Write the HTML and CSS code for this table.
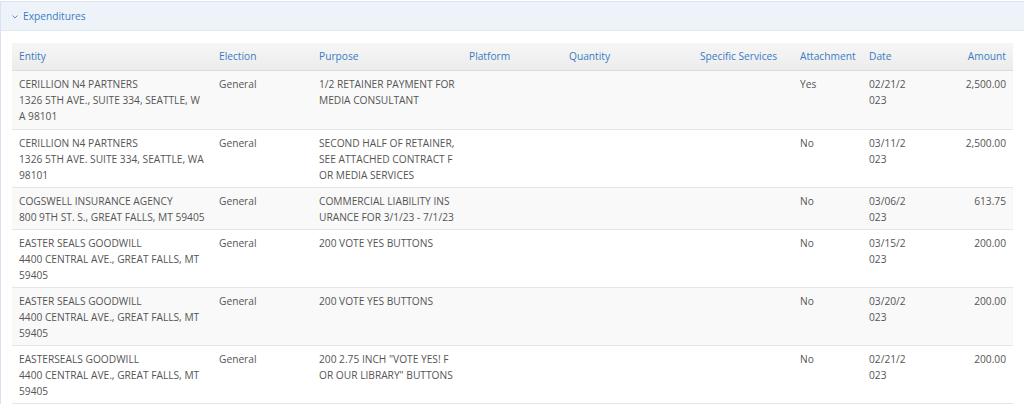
FILE: index.html
```html
<!DOCTYPE html>
<html>
<head>
<meta charset="utf-8">
<link rel="stylesheet" href="styles.css">
</head>
<body>
<div class="panel">
  <div class="panel-head">
    <svg class="chev" width="8" height="6" viewBox="0 0 8 6"><path d="M1.5 1.5 L4 4 L6.5 1.5" fill="none" stroke="#5a8fd0" stroke-width="1"/></svg>
    <span class="title">Expenditures</span>
  </div>
  <div class="panel-body">
    <table class="grid">
      <colgroup>
        <col style="width:200px"><col style="width:100px"><col style="width:150px"><col style="width:100px"><col style="width:131px"><col style="width:100px"><col style="width:69px"><col style="width:52px"><col style="width:99px">
      </colgroup>
      <thead>
        <tr>
          <th>Entity</th><th>Election</th><th>Purpose</th><th>Platform</th><th>Quantity</th><th>Specific Services</th><th>Attachment</th><th>Date</th><th class="num">Amount</th>
        </tr>
      </thead>
      <tbody>
        <tr>
          <td>CERILLION N4 PARTNERS<br>1326 5TH AVE., SUITE 334, SEATTLE, WA 98101</td>
          <td>General</td><td class="purpose">1/2 RETAINER PAYMENT FOR MEDIA CONSULTANT</td><td></td><td></td><td></td><td>Yes</td><td class="date">02/21/2023</td><td class="num">2,500.00</td>
        </tr>
        <tr>
          <td>CERILLION N4 PARTNERS<br>1326 5TH AVE. SUITE 334, SEATTLE, WA 98101</td>
          <td>General</td><td class="purpose">SECOND HALF OF RETAINER, SEE ATTACHED CONTRACT FOR MEDIA SERVICES</td><td></td><td></td><td></td><td>No</td><td class="date">03/11/2023</td><td class="num">2,500.00</td>
        </tr>
        <tr>
          <td>COGSWELL INSURANCE AGENCY<br>800 9TH ST. S., GREAT FALLS, MT 59405</td>
          <td>General</td><td class="purpose">COMMERCIAL LIABILITY INSURANCE FOR 3/1/23 - 7/1/23</td><td></td><td></td><td></td><td>No</td><td class="date">03/06/2023</td><td class="num">613.75</td>
        </tr>
        <tr>
          <td>EASTER SEALS GOODWILL<br>4400 CENTRAL AVE., GREAT FALLS, MT 59405</td>
          <td>General</td><td class="purpose">200 VOTE YES BUTTONS</td><td></td><td></td><td></td><td>No</td><td class="date">03/15/2023</td><td class="num">200.00</td>
        </tr>
        <tr>
          <td>EASTER SEALS GOODWILL<br>4400 CENTRAL AVE., GREAT FALLS, MT 59405</td>
          <td>General</td><td class="purpose">200 VOTE YES BUTTONS</td><td></td><td></td><td></td><td>No</td><td class="date">03/20/2023</td><td class="num">200.00</td>
        </tr>
        <tr>
          <td>EASTERSEALS GOODWILL<br>4400 CENTRAL AVE., GREAT FALLS, MT 59405</td>
          <td>General</td><td class="purpose">200 2.75 INCH "VOTE YES! FOR OUR LIBRARY" BUTTONS</td><td></td><td></td><td></td><td>No</td><td class="date">02/21/2023</td><td class="num">200.00</td>
        </tr>
      </tbody>
    </table>
  </div>
</div>
</body>
</html>
```

FILE: styles.css
```css
html, body {
  margin: 0;
  padding: 0;
  background: #ffffff;
}
body {
  font-family: "Open Sans", "Liberation Sans", sans-serif;
  font-size: 10.2px;
  line-height: 16px;
  color: #555555;
}
.panel {
  border-left: 1px solid #d9e3ef;
  border-top: 1px solid #dbe4ee;
  margin-top: 1px;
}
.panel-head {
  display: flex;
  align-items: center;
  height: 28px;
  background: #eef3f9;
  border-bottom: 1px solid #dfe7f0;
  padding-left: 10px;
  gap: 4px;
}
.chev {
  display: block;
  margin-top: 1px;
}
.title {
  color: #3c7cc4;
  font-size: 10.2px;
}
.panel-body {
  padding: 12px 10px 0 11px;
}
.grid {
  table-layout: fixed;
  border-collapse: collapse;
  width: 1001px;
}
.grid th {
  text-align: left;
  font-weight: normal;
  color: #3a7bc3;
  background: linear-gradient(#f6f6f6, #ececec);
  border-bottom: 1px solid #dcdcdc;
  padding: 5px 7px 6px 7px;
  height: 16px;
}
.grid td {
  vertical-align: top;
  padding: 5px 7px 4px 7px;
  word-break: break-all;
  border-top: 1px solid #e6e6e6;
}
.grid td.purpose {
  padding-right: 6.5px;
}
.grid td.date {
  padding-right: 5px;
}
.grid tbody tr:first-child td {
  border-top: none;
  padding-bottom: 5px;
}
.grid tbody tr:nth-child(odd) td {
  background: #f9f9f9;
}
.grid tbody tr:last-child td {
  border-bottom: 1px solid #e6e6e6;
}
.grid .num {
  text-align: right;
}
```
